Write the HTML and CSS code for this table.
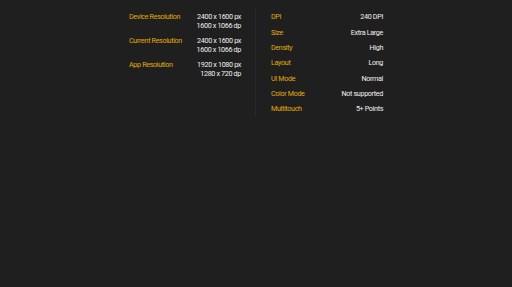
FILE: index.html
```html
<!DOCTYPE html>
<html>
<head>
<meta charset="utf-8">
<link rel="stylesheet" href="styles.css">
</head>
<body>
<main class="info">
  <section class="col col-left">
    <div class="group">
      <div class="label">Device Resolution</div>
      <div class="value"><div>2400 x 1600 px</div><div>1600 x 1066 dp</div></div>
    </div>
    <div class="group">
      <div class="label">Current Resolution</div>
      <div class="value"><div>2400 x 1600 px</div><div>1600 x 1066 dp</div></div>
    </div>
    <div class="group">
      <div class="label">App Resolution</div>
      <div class="value"><div>1920 x 1080 px</div><div>1280 x 720 dp</div></div>
    </div>
  </section>
  <section class="col col-right">
    <div class="row"><span class="label">DPI</span><span class="value">240 DPI</span></div>
    <div class="row"><span class="label">Size</span><span class="value">Extra Large</span></div>
    <div class="row"><span class="label">Density</span><span class="value">High</span></div>
    <div class="row"><span class="label">Layout</span><span class="value">Long</span></div>
    <div class="row"><span class="label">UI Mode</span><span class="value">Normal</span></div>
    <div class="row"><span class="label">Color Mode</span><span class="value">Not supported</span></div>
    <div class="row"><span class="label">Multitouch</span><span class="value">5+ Points</span></div>
  </section>
</main>
</body>
</html>
```
FILE: styles.css
```css
html, body {
  margin: 0;
  padding: 0;
  background: #1f1f1f;
  width: 512px;
  height: 287px;
  overflow: hidden;
}
body {
  font-family: Roboto, "Liberation Sans", sans-serif;
  font-size: 7.2px;
  line-height: 8.67px;
  letter-spacing: -0.35px;
  color: #f0f0f0;
}
.info {
  display: flex;
  justify-content: center;
  padding-top: 10px;
}
.col {
  width: 112px;
}
.col-left {
  padding-right: 14px;
}
.col-right {
  padding-left: 15px;
  border-left: 1px solid #2a2a2a;
  margin-top: -2px;
  padding-top: 2px;
}
.label {
  color: #e2aa08;
}
.group {
  display: flex;
  justify-content: space-between;
  padding: 3.33px 0;
}
.group .value {
  text-align: right;
}
.row {
  display: flex;
  justify-content: space-between;
  padding: 3.33px 0;
}
```
